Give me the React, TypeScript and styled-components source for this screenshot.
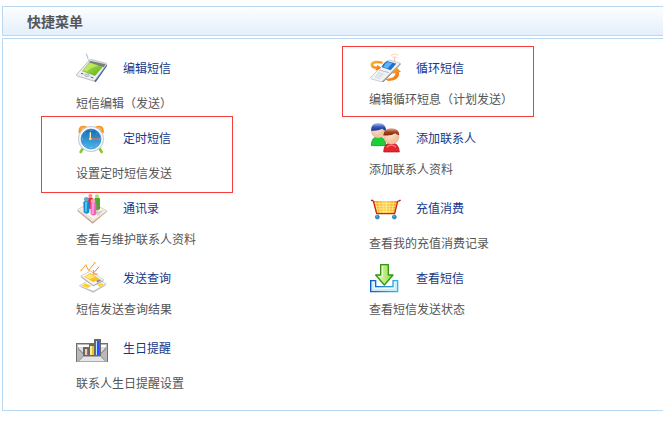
import React from "react";
import styled, { createGlobalStyle, css } from "styled-components";

const GlobalStyle = createGlobalStyle`
  *, *::after { box-sizing: border-box; }
  body {
    margin: 0;
    background: #fff;
    color: #555;
    font: 12px/20px "Noto Sans CJK SC", sans-serif;
  }
`;

const Page = styled.main`
  padding: 6px 0 16px 2px;
  overflow-x: hidden;
`;

const Header = styled.header`
  display: flex;
  align-items: center;
  height: 30px;
  padding: 0 24px;
  border: 1px solid #b8d9f3;
  border-right: 0;
  background: linear-gradient(#fdfeff, #e3effc);
`;

const Heading = styled.h1`
  margin: 0;
  font-size: 14px;
  line-height: 20px;
  font-weight: 700;
`;

const Panel = styled.nav`
  margin-top: 2px;
  padding: 9px 1px 12px 73px;
  border: 1px solid #b8d9f3;
  border-right: 0;
`;

const MenuGrid = styled.ul`
  display: grid;
  grid-template-columns: 1fr 1fr;
  grid-auto-rows: minmax(70px, auto);
  margin: 0;
  padding: 0;
  list-style: none;
`;

type Mark = "wide" | "close";

const MenuItem = styled.li<{ $mark?: Mark }>`
  position: relative;
  ${({ $mark }) =>
    $mark &&
    css`
      &::after {
        content: "";
        position: absolute;
        top: -2px;
        left: ${$mark === "wide" ? "-35px" : "-27px"};
        width: 192px;
        height: ${$mark === "wide" ? "77px" : "71px"};
        border: 1px solid #f43d3d;
        pointer-events: none;
      }
    `}
`;

const MenuLink = styled.a`
  display: flex;
  width: fit-content;
  align-items: center;
  gap: 15px;
  height: 40px;
  color: #15388a;
  text-decoration: none;
  &:hover { text-decoration: underline; }
`;

const Icon = styled.svg`
  flex: none;
  width: 32px;
  height: 32px;
`;

const Description = styled.p<{ $roomy?: boolean }>`
  margin: ${({ $roomy }) => ($roomy ? "5px" : "1px")} 0 0;
`;

const PdaIcon = () => (
  <Icon viewBox="18 12 96 96" aria-hidden="true">
    <defs>
      <linearGradient id="pda" x1="0" y1="0" x2="1" y2="1">
        <stop offset="0" stopColor="#b5eb52" />
        <stop offset="1" stopColor="#5fae1c" />
      </linearGradient>
    </defs>
    <path d="M49 18l8 20" stroke="#b4c8e4" strokeWidth="4" strokeLinecap="round" />
    <path d="M55 29l5 14" stroke="#fff" strokeWidth="2" />
    <path d="M109 48l2 6-34 49-6-5z" fill="#355f96" />
    <path d="M58 37q2-3 7-2l43 11q3 1 1 5L76 96q-3 4-8 2L22 84q-5-2-1-6z" fill="#eef0f2" stroke="#9a9fa6" strokeWidth="2" />
    <path d="M61 38l46 11-6 9-45-14z" fill="#777d82" />
    <path d="M59 43l39 13-23 27-38-14z" fill="url(#pda)" stroke="#68933a" />
    <path d="M60 45l25 8q-22 4-34 18l-12-4z" fill="#d9f67c" opacity=".55" />
    <ellipse cx="51" cy="82" rx="7" ry="4" fill="#d2d5dd" stroke="#68718a" />
    <path d="M33 76l7 2M62 87l8 3" stroke="#5d6470" strokeWidth="3" />
  </Icon>
);

const ClockIcon = () => (
  <Icon viewBox="18 12 96 96" aria-hidden="true">
    <defs>
      <linearGradient id="clockFace" x1="0" y1="0" x2="0" y2="1">
        <stop offset="0" stopColor="#1869b5" />
        <stop offset="1" stopColor="#48b8ec" />
      </linearGradient>
      <radialGradient id="bell">
        <stop offset="0" stopColor="#ffcb62" />
        <stop offset="1" stopColor="#f58a10" />
      </radialGradient>
    </defs>
    <path d="M39 91l-7 11M88 91l7 11" stroke="#8bc52f" strokeWidth="8" strokeLinecap="round" />
    <path d="M26 46q-3-22 13-23 13-1 18 11z" fill="url(#bell)" />
    <path d="M101 46q3-22-13-23-13-1-18 11z" fill="url(#bell)" />
    <circle cx="63" cy="63" r="38" fill="#d9e0e8" stroke="#b5c0cc" strokeWidth="2" />
    <circle cx="63" cy="63" r="35" fill="#f8fbff" />
    <circle cx="63" cy="63" r="30" fill="url(#clockFace)" stroke="#3a80bb" strokeWidth="2" />
    <path d="M63 36v3M63 87v3M36 63h3M87 63h3M44 44l2 2M82 44l-2 2M44 82l2-2M82 82l-2-2" stroke="#b9e3f8" strokeWidth="2" />
    <path d="M61 63V43" stroke="#fff2a8" strokeWidth="4" />
    <path d="M61 63h27" stroke="#e57058" strokeWidth="4" />
    <circle cx="61" cy="63" r="4" fill="#ffdf62" />
  </Icon>
);

const ContactsIcon = () => (
  <Icon viewBox="18 12 96 96" aria-hidden="true">
    <path d="M22 69l41-23 49 24-44 37z" fill="#bfa08a" />
    <path d="M22 65l41-22 48 26-43 33z" fill="#fbf5ee" stroke="#d0bbab" strokeWidth="2" />
    <path d="M27 68l39 28M31 65l37 28M66 98l42-29" stroke="#e0d0c4" strokeWidth="2" />
    <path d="M77 71l25-4-20 17z" fill="#c0bab5" opacity=".7" />
    <path d="M54 31q8-7 15 0l1 25-8 8-9-4z" fill="#e92c3a" />
    <circle cx="61" cy="24" r="6" fill="#ff9183" />
    <path d="M73 32q9-8 17 0v31q-9 8-16 1z" fill="#4da832" />
    <circle cx="81" cy="25" r="6" fill="#bbd977" />
    <path d="M40 42q9-8 18 0v31q-8 8-17 0z" fill="#168bd0" />
    <path d="M45 42h7l-2 30-5-1z" fill="#51c5eb" />
    <circle cx="49" cy="34" r="7" fill="#54acd9" />
    <path d="M61 47q9-8 18 0v31q-8 9-17 0z" fill="#f260ba" />
    <path d="M66 46h7l-2 33-6-1z" fill="#ff9cd7" />
    <circle cx="69" cy="40" r="7" fill="#f5a0c9" />
  </Icon>
);

const QueryIcon = () => (
  <Icon viewBox="18 12 96 96" aria-hidden="true">
    <path d="M30 86l38-18 41 13-39 23z" fill="#bec0c6" />
    <path d="M28 83l40-22 41 16-39 23z" fill="#fff" stroke="#bbb" strokeWidth="2" />
    <path d="M34 83l12-7 18 7-10 7zM81 79l13-3 8 3-13 8z" fill="#ffd12e" />
    <path d="M33 58l29-16 39 27-31 16z" fill="#999ca1" />
    <path d="M32 54l30-15 39 27-31 16z" fill="#f9f9fb" stroke="#b8b9bd" strokeWidth="2" />
    <path d="M42 56l20-11 27 18-19 10z" fill="#ffbf24" />
    <path d="M45 56l17-8 13 9-16 7z" fill="#ffe876" />
    <path d="M79 68l9-4 6 3-13 7z" fill="#85888d" />
    <path d="M33 38l14-17 9 16 19-23" stroke="#f49a48" strokeWidth="3" fill="none" />
    <path d="M87 26L72 44M70 36v12h13" stroke="#ee8232" strokeWidth="3" fill="none" />
    <g fill="#ffbf49">
      <circle cx="34" cy="37" r="3" />
      <circle cx="48" cy="22" r="3" />
      <circle cx="57" cy="37" r="3" />
      <circle cx="74" cy="15" r="3" />
    </g>
  </Icon>
);

const ReminderIcon = () => (
  <Icon viewBox="18 6 96 96" aria-hidden="true" shapeRendering="crispEdges">
    <path d="M20 41h92v54H20z" fill="#b9b9b9" stroke="#707070" strokeWidth="4" />
    <path d="M24 48h84L91 75H39z" fill="#ddd" />
    <path d="M24 45h84v6H24z" fill="#fff" />
    <path d="M24 54l18 21M108 54L90 75" stroke="#999" strokeWidth="4" />
    <path d="M25 93l15-15h51l16 15z" fill="#e5e5e5" stroke="#aaa" strokeWidth="3" />
    <path d="M39 51h18v-9h15V27h20v51H39z" fill="#686868" />
    <path d="M45 57h9v18h-9z" fill="#ffc0c0" />
    <path d="M51 57h3v18h-3z" fill="#f34a4a" />
    <path d="M60 48h12v27H60z" fill="#ffed9c" />
    <path d="M66 48h6v27h-6z" fill="#eebc35" />
    <path d="M78 33h9v42h-9z" fill="#3446ff" />
    <path d="M78 33h4v42h-4z" fill="#a8efff" />
  </Icon>
);

const LoopIcon = () => (
  <Icon viewBox="15 12 96 96" aria-hidden="true">
    <defs>
      <linearGradient id="loopArrow" x1="0" y1="0" x2="1" y2="1">
        <stop offset="0" stopColor="#ffc329" />
        <stop offset="1" stopColor="#ed6112" />
      </linearGradient>
    </defs>
    <path d="M81 23q11-10 22 0M85 29q7-6 14 0" stroke="#ffd0b9" strokeWidth="3" fill="none" />
    <path d="M92 28l-1 17" stroke="#f1d0c0" strokeWidth="4" />
    <path d="M106 44l5 4-53 55-8-5z" fill="#85888e" />
    <path d="M57 51q8-13 19-15l29 8q4 2 1 5L57 98q-4 4-10 2l-24-7q-5-2-2-6z" fill="#f2f3f6" stroke="#b3b8c0" strokeWidth="2" />
    <path d="M69 40l27 7-16 19-26-9q5-12 15-17z" fill="#246ec5" stroke="#17549e" />
    <path d="M70 42l15 4-15 16-12-5q4-10 12-15z" fill="#54b4ff" />
    <path d="M46 66l29 8" stroke="#9ca2ab" strokeWidth="2" />
    <path d="M43 74l19 6M38 80l19 6M33 86l17 6M47 72L34 88M56 75L42 92" stroke="#bfd1da" strokeWidth="2" />
    <path d="M57 41Q22 33 20 49q-2 12 16 14l-2 6 18-10-13-9-1 6q-13-1-9-7 5-6 26-2z" fill="url(#loopArrow)" />
    <path d="M89 69l10-10 12 13-6 1q3 24-33 26l-9-6q34-2 31-18l-9 2z" fill="url(#loopArrow)" />
  </Icon>
);

const PeopleIcon = () => (
  <Icon viewBox="15 12 96 96" aria-hidden="true">
    <defs>
      <radialGradient id="skin" cx=".4" cy=".3">
        <stop offset="0" stopColor="#fff0df" />
        <stop offset="1" stopColor="#f3c4a0" />
      </radialGradient>
      <linearGradient id="blueHair" x1="0" y1="0" x2="0" y2="1">
        <stop offset="0" stopColor="#b2c5f5" />
        <stop offset=".5" stopColor="#3657bb" />
        <stop offset="1" stopColor="#172f8c" />
      </linearGradient>
      <linearGradient id="brownHair" x1="0" y1="0" x2="0" y2="1">
        <stop offset="0" stopColor="#e8af92" />
        <stop offset=".5" stopColor="#a54323" />
        <stop offset="1" stopColor="#7d250f" />
      </linearGradient>
    </defs>
    <path d="M22 83q0-27 21-27t23 27z" fill="#1bcf35" stroke="#16812c" strokeWidth="2" />
    <circle cx="43" cy="39" r="21" fill="url(#skin)" stroke="#c59b84" />
    <path d="M21 38Q20 16 43 15q23 0 23 24-8-3-11-7-13 8-34 6z" fill="url(#blueHair)" />
    <path d="M59 102q0-27 23-27t24 27z" fill="#e5262e" stroke="#a6131d" strokeWidth="2" />
    <path d="M68 88q14-13 28 0" stroke="#fa7776" strokeWidth="4" fill="none" />
    <circle cx="82" cy="56" r="23" fill="url(#skin)" stroke="#c58d70" />
    <path d="M58 52q1-20 24-21 23 0 24 21-8-2-12-6-13 9-36 6z" fill="url(#brownHair)" />
  </Icon>
);

const CartIcon = () => (
  <Icon viewBox="15 12 96 96" aria-hidden="true">
    <defs>
      <linearGradient id="cart" x1="0" y1="0" x2="1" y2="0">
        <stop offset="0" stopColor="#ff9b13" />
        <stop offset=".5" stopColor="#ffd44b" />
        <stop offset="1" stopColor="#f79a12" />
      </linearGradient>
    </defs>
    <path d="M28 39h72l-7 36H36z" fill="url(#cart)" />
    <path d="M34 42l7 31M45 40l4 34M56 40l2 34M67 40v34M78 40l-2 34M89 40l-5 34M30 47h68M32 55h64M33 63h62M35 71h59" stroke="#fff2a6" strokeWidth="2" />
    <path d="M23 37l5 2 10 38h54l9-37 7-2" stroke="#d22418" strokeWidth="4" fill="none" strokeLinejoin="round" />
    <path d="M21 37h5M106 37h4" stroke="#8f1714" strokeWidth="4" />
    <g fill="#2896cc" stroke="#2670a1" strokeWidth="2">
      <circle cx="40" cy="87" r="6" />
      <circle cx="91" cy="87" r="6" />
    </g>
    <path d="M37 84h3M88 84h3" stroke="#9be1f8" strokeWidth="3" />
  </Icon>
);

const InboxIcon = () => (
  <Icon viewBox="15 12 96 96" aria-hidden="true">
    <defs>
      <linearGradient id="tray" x1="0" y1="0" x2="1" y2="0">
        <stop offset="0" stopColor="#1558bd" />
        <stop offset="1" stopColor="#36b7eb" />
      </linearGradient>
      <linearGradient id="down" x1="0" y1="0" x2="1" y2="0">
        <stop offset="0" stopColor="#eaffba" />
        <stop offset="1" stopColor="#91d949" />
      </linearGradient>
    </defs>
    <path d="M20 68h15v18h52V68h14v33H20z" fill="#c6edfa" stroke="url(#tray)" strokeWidth="4" />
    <path d="M25 73h5v18h62V73h4" fill="none" stroke="#f3fdff" strokeWidth="3" />
    <path d="M50 20h23v31h14L61 81 35 51h15z" fill="url(#down)" stroke="#369414" strokeWidth="4" strokeLinejoin="round" />
    <path d="M55 25v31H46" fill="none" stroke="#f4ffdb" strokeWidth="3" />
  </Icon>
);

interface Entry {
  title: string;
  description: string;
  Drawing: React.ComponentType;
  roomy?: boolean;
  mark?: Mark;
}

const entries: Entry[] = [
  { title: "编辑短信", description: "短信编辑（发送）", Drawing: PdaIcon, roomy: true },
  { title: "循环短信", description: "编辑循环短息（计划发送）", Drawing: LoopIcon, mark: "close" },
  { title: "定时短信", description: "设置定时短信发送", Drawing: ClockIcon, roomy: true, mark: "wide" },
  { title: "添加联系人", description: "添加联系人资料", Drawing: PeopleIcon },
  { title: "通讯录", description: "查看与维护联系人资料", Drawing: ContactsIcon },
  { title: "充值消费", description: "查看我的充值消费记录", Drawing: CartIcon, roomy: true },
  { title: "发送查询", description: "短信发送查询结果", Drawing: QueryIcon },
  { title: "查看短信", description: "查看短信发送状态", Drawing: InboxIcon },
  { title: "生日提醒", description: "联系人生日提醒设置", Drawing: ReminderIcon, roomy: true },
];

export default function App() {
  return (
    <>
      <GlobalStyle />
      <Page lang="zh-CN">
        <Header>
          <Heading id="menu-title">快捷菜单</Heading>
        </Header>
        <Panel aria-labelledby="menu-title">
          <MenuGrid>
            {entries.map(({ title, description, Drawing, roomy, mark }) => (
              <MenuItem key={title} $mark={mark}>
                <MenuLink href="#">
                  <Drawing />
                  {title}
                </MenuLink>
                <Description $roomy={roomy}>{description}</Description>
              </MenuItem>
            ))}
          </MenuGrid>
        </Panel>
      </Page>
    </>
  );
}
